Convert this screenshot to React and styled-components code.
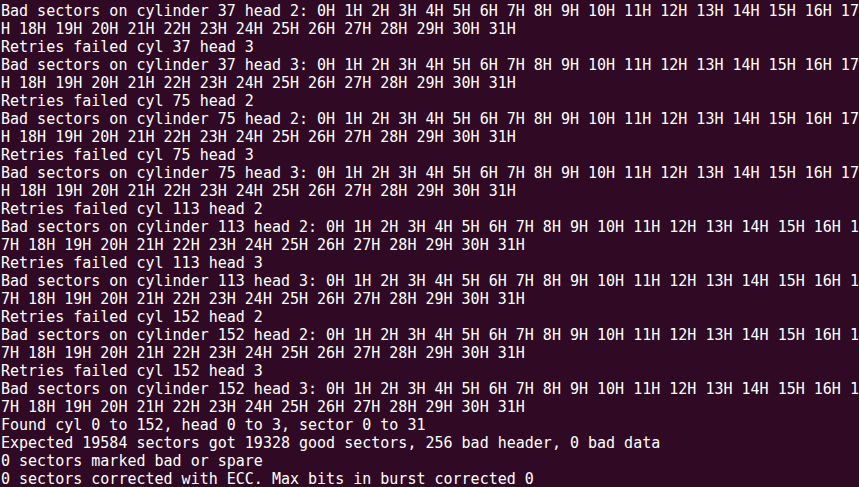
import React from 'react';
import styled, {createGlobalStyle} from 'styled-components';

const GlobalStyle = createGlobalStyle`
  html, body {
    margin: 0;
    padding: 0;
    background-color: #300a24;
    overflow: hidden;
  }
`;

const Terminal = styled.div`
  box-sizing: border-box;
  width: 859px;
  height: 487px;
  overflow: hidden;
  padding: 2px 0 0 1px;
  background-color: #300a24;
  color: #ffffff;
  font-family: "DejaVu Sans Mono", monospace;
  font-size: 15px;
  line-height: 18px;
`;

const Line = styled.div`
  width: 95ch;
  white-space: pre-wrap;
  word-break: break-all;
`;

const sectors = Array.from({length: 32}, (_, i) => `${i}H`).join(' ');

const badTracks = [
  [37, 2], [37, 3], [75, 2], [75, 3], [113, 2], [113, 3], [152, 2], [152, 3],
];

const lines = [];
badTracks.forEach(([cyl, head], i) => {
  if (i > 0) lines.push(`Retries failed cyl ${cyl} head ${head}`);
  lines.push(`Bad sectors on cylinder ${cyl} head ${head}: ${sectors}`);
});
lines.push('Found cyl 0 to 152, head 0 to 3, sector 0 to 31');
lines.push('Expected 19584 sectors got 19328 good sectors, 256 bad header, 0 bad data');
lines.push('0 sectors marked bad or spare');
lines.push('0 sectors corrected with ECC. Max bits in burst corrected 0');

function App() {
  return (
    <>
      <GlobalStyle/>
      <Terminal>
        {lines.map((text, i) => (
          <Line key={i}>{text}</Line>
        ))}
      </Terminal>
    </>
  );
}

export default App;
